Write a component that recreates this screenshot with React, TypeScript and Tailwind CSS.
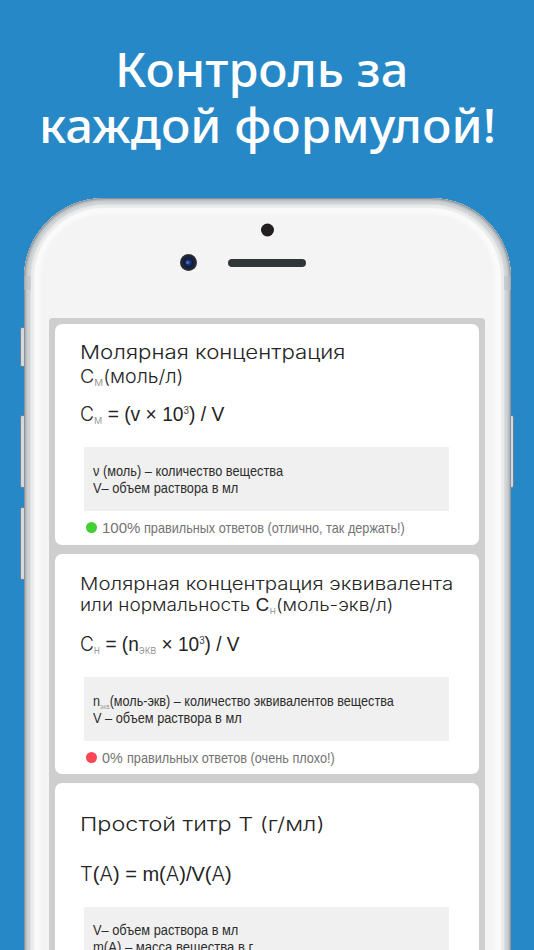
import { useLayoutEffect, useRef, useState, type ReactNode } from "react";

/* A run of text condensed or widened horizontally to an exact width. */
function Fit({ width, className = "", children }: { width: number; className?: string; children: ReactNode }) {
  const ref = useRef<HTMLSpanElement>(null);
  const [scale, setScale] = useState(1);
  useLayoutEffect(() => {
    if (ref.current) setScale(width / ref.current.offsetWidth);
  }, [width]);
  return (
    <span className={`block ${className}`} style={{ width }}>
      <span
        ref={ref}
        className="inline-block origin-left whitespace-pre align-top"
        style={{ transform: `scaleX(${scale})` }}
      >
        {children}
      </span>
    </span>
  );
}

const geo = "font-[Inter,sans-serif] font-light leading-none";

function Sub({ children, className = "text-[11px]" }: { children: ReactNode; className?: string }) {
  return <span className={`relative top-[3px] text-[#8b8b8b] ${geo} ${className}`}>{children}</span>;
}

function Cube() {
  return <span className="relative -top-[7px] text-[10px] leading-none text-[#444]">3</span>;
}

function Notes({ children }: { children: ReactNode }) {
  return (
    <div className="ml-[29.5px] h-[63.5px] w-[365px] bg-[#f0f0f0] pl-[8.5px] pt-[14.5px] text-[15px] leading-[17px] text-[#2c2c2c]">
      {children}
    </div>
  );
}

interface StatusProps {
  color: string;
  percent: string;
  percentWidth: number;
  width: number;
  children: ReactNode;
}

function Status({ color, percent, percentWidth, width, children }: StatusProps) {
  return (
    <div className="ml-[31.5px] mt-[7px] flex h-[20px] items-center text-[15px] leading-[20px] text-[#737373]">
      <span className={`mr-[5px] size-[11px] shrink-0 rounded-full ${color}`} />
      <Fit width={percentWidth}>{percent}</Fit>
      <Fit className="ml-[4px]" width={width}>{children}</Fit>
    </div>
  );
}

export default function App() {
  return (
    <div className="h-[950px] w-[534px] overflow-hidden bg-[#2688c7] font-['Liberation_Sans',sans-serif]">
      <h1 className="flex h-[198px] flex-col items-center pt-[41px] font-['Noto_Sans',sans-serif] text-[47px] font-medium leading-[56px] text-white">
        <Fit className="mr-[12px]" width={293}>Контроль за</Fit>
        <Fit width={457}>каждой формулой!</Fit>
      </h1>

      <div className="relative ml-[23.5px] h-[900px] w-[487px]">
        <span className="absolute -left-[4px] top-[129px] h-[40px] w-[5px] rounded-l-[2px] border border-[#6f8290] bg-[#d3d9df]" />
        <span className="absolute -left-[4px] top-[217px] h-[73px] w-[5px] rounded-l-[2px] border border-[#6f8290] bg-[#d3d9df]" />
        <span className="absolute -left-[4px] top-[309px] h-[73px] w-[5px] rounded-l-[2px] border border-[#6f8290] bg-[#d3d9df]" />
        <span className="absolute -right-[3.5px] top-[217px] h-[73px] w-[5px] rounded-r-[2px] border border-[#6f8290] bg-[#d3d9df]" />

        <div className="relative h-full w-full rounded-t-[80px] bg-[#f4f4f4] pt-[24px] shadow-[inset_0_0_1px_1px_#8b9094,inset_0_0_1px_2.5px_#b3b8bb,inset_0_0_0_4px_#c8cdd0,inset_0_0_0_6px_#cfd4d7,inset_0_0_0_7px_#dcdfe1,inset_0_0_1px_10px_#eaebeb,inset_0_0_3px_16px_#fafafa]">
          <span className="absolute left-0 top-[78px] h-[14px] w-[7px] bg-[#b9bcc2]/50" />
          <span className="absolute right-0 top-[78px] h-[14px] w-[7px] bg-[#b9bcc2]/50" />
          <div className="mx-auto h-[13px] w-[13px] translate-y-[1.5px] rounded-full bg-[#231f20]" />
          <div className="ml-[156.5px] mt-[19px] flex h-[17px] items-center gap-[30.5px]">
            <span className="flex size-[17px] items-center justify-center rounded-full bg-[radial-gradient(circle,#2b4e9e_0%,#101b45_35%,#22282e_55%,#343a3c_80%,#777_100%)]">
              <span className="size-[3px] -translate-x-px rounded-full bg-[#4d73c4]" />
            </span>
            <span className="h-[8px] w-[78px] rounded-full bg-[#303638]" />
          </div>

          <main className="ml-[25.5px] mt-[47px] flex h-[700px] w-[436px] flex-col gap-[9px] rounded-t-[4px] bg-[#cecece] pl-[5.5px] pr-[6px] pt-[6px] text-[#242424]">
            <section className="h-[220.5px] shrink-0 rounded-[7px] bg-white">
              <div className="ml-[25.5px] pt-[17px] font-[Inter,sans-serif] text-[18.5px] font-light leading-[23.5px]">
                <Fit width={265}>Молярная концентрация</Fit>
                <Fit width={103}>С<Sub>м</Sub>(моль/л)</Fit>
              </div>
              <div className="ml-[25.5px] mt-[14px] h-[24px] text-[19.5px] leading-[24px]">
                <Fit width={144}><span className={geo}>С</span><Sub>м</Sub> = (v × 10<Cube />) / V</Fit>
              </div>
              <div className="h-[21px]" />
              <Notes>
                <Fit width={190}>ν (моль) – количество вещества</Fit>
                <Fit width={145}>V– объем раствора в мл</Fit>
              </Notes>
              <Status color="bg-[#43cf35]" percent="100%" percentWidth={38} width={261}>правильных ответов (отлично, так держать!)</Status>
            </section>

            <section className="h-[220.5px] shrink-0 rounded-[7px] bg-white">
              <div className="ml-[25.5px] pt-[20px] font-[Inter,sans-serif] text-[17px] font-light leading-[21.5px]">
                <Fit width={373}>Молярная концентрация эквивалента</Fit>
                <Fit width={313}>или нормальность <span className="font-normal">С</span><Sub className="text-[10px]">н</Sub>(моль-экв/л)</Fit>
              </div>
              <div className="ml-[25.5px] mt-[15px] h-[24px] text-[19.5px] leading-[24px]">
                <Fit width={159}><span className={geo}>С</span><Sub>н</Sub> = (n<Sub>экв</Sub> × 10<Cube />) / V</Fit>
              </div>
              <div className="h-[21.5px]" />
              <Notes>
                <Fit width={301}>n<Sub className="text-[7px]">экв</Sub>(моль-экв) – количество эквивалентов вещества</Fit>
                <Fit width={149}>V – объем раствора в мл</Fit>
              </Notes>
              <Status color="bg-[#fa4654]" percent="0%" percentWidth={21} width={208}>правильных ответов (очень плохо!)</Status>
            </section>

            <section className="h-[300px] shrink-0 rounded-[7px] bg-white">
              <div className="ml-[25.5px] pt-[30px] font-[Inter,sans-serif] text-[19px] font-light leading-[24px]">
                <Fit width={244}>Простой титр Т (г/мл)</Fit>
              </div>
              <div className="ml-[25.5px] mt-[25px] h-[24px] text-[19.5px] leading-[24px]">
                <Fit width={152}><span className={geo}>Т</span>(<span className={geo}>А</span>) = m(<span className={geo}>А</span>)/V(<span className={geo}>А</span>)</Fit>
              </div>
              <div className="h-[20.5px]" />
              <Notes>
                <Fit width={145}>V– объем раствора в мл</Fit>
                <Fit width={160}>m(A) – масса вещества в г</Fit>
              </Notes>
            </section>
          </main>
        </div>
      </div>
    </div>
  );
}
